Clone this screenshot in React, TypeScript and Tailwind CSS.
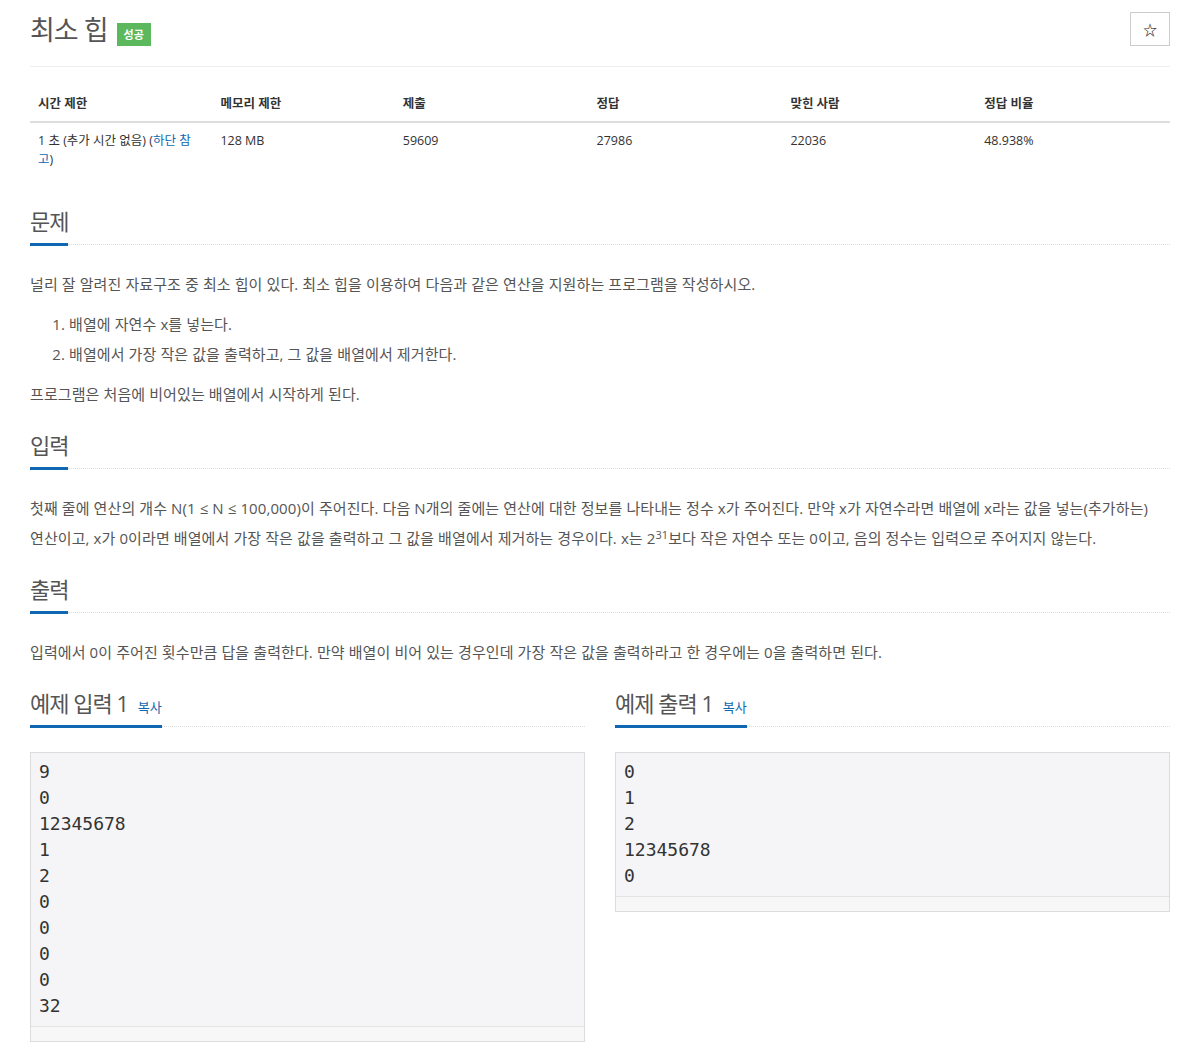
import React from "react";

const sans = "font-['Open_Sans','Noto_Sans_CJK_KR',sans-serif]";

function SectionTitle({ children }: { children: React.ReactNode }) {
  return (
    <div className="flex items-end">
      <span className="inline-block border-b-[3px] border-[#0f67b1] pb-[9px] text-[22px] leading-[26px] text-[#555] tracking-[-1px]">
        {children}
      </span>
      <div className="flex-1 mb-[1px] border-b border-dotted border-[#ddd]" />
    </div>
  );
}

function CopyLink() {
  return <span className="ml-[5px] text-[13px] leading-none text-[#0f67b1] tracking-normal">복사</span>;
}

function SampleBox({ lines }: { lines: string[] }) {
  return (
    <div className="border border-[#dcdcdc] bg-[#f5f5f7]">
      <pre className="px-[8px] pt-[6px] pb-[7px] font-['DejaVu_Sans_Mono',monospace] text-[18px] leading-[26px] text-[#333]">
        {lines.join("\n")}
      </pre>
      <div className="h-[15px] border-t border-[#e3e3e3] bg-[#f7f7f8]" />
    </div>
  );
}

export default function App() {
  const stats = [
    { label: "시간 제한", w: "w-[16%]" },
    { label: "메모리 제한", w: "w-[16%]" },
    { label: "제출", w: "w-[17%]" },
    { label: "정답", w: "w-[17%]" },
    { label: "맞힌 사람", w: "w-[17%]" },
    { label: "정답 비율", w: "" },
  ];

  return (
    <div className={`${sans} bg-white min-h-[1055px] pl-[30px] pr-[31px] text-[#555]`}>
      {/* header */}
      <div className="flex items-start justify-between border-b border-[#eee] pt-[12px] pb-[20px]">
        <div className="flex items-center gap-[9px] pt-[1px]">
          <h1 className="text-[27px] leading-[32px] text-[#555] tracking-[-1px]">최소 힙</h1>
          <span className="mt-[10px] bg-[#5cb85c] px-[7px] py-[3px] text-[11px] leading-[17px] font-bold text-white">성공</span>
        </div>
        <button className="h-[34px] w-[40px] border border-[#ccc] bg-white text-[14px] font-bold text-[#333] flex items-center justify-center">
          ☆
        </button>
      </div>

      {/* stats table */}
      <table className="mt-[20px] w-full border-collapse text-[12.5px] text-[#333]">
        <thead>
          <tr className="border-b-2 border-[#ddd]">
            {stats.map((s) => (
              <th key={s.label} className={`${s.w} px-[8px] py-[8px] text-left font-bold align-bottom leading-[18px]`}>
                {s.label}
              </th>
            ))}
          </tr>
        </thead>
        <tbody>
          <tr>
            <td className="px-[8px] pt-[8px] pb-[8px] align-top leading-[19px]">
              1 초 (추가 시간 없음) (<span className="text-[#0f67b1]">하단 참고</span>)
            </td>
            <td className="px-[8px] pt-[8px] align-top leading-[19px]">128 MB</td>
            <td className="px-[8px] pt-[8px] align-top leading-[19px]">59609</td>
            <td className="px-[8px] pt-[8px] align-top leading-[19px]">27986</td>
            <td className="px-[8px] pt-[8px] align-top leading-[19px]">22036</td>
            <td className="px-[8px] pt-[8px] align-top leading-[19px]">48.938%</td>
          </tr>
        </tbody>
      </table>

      {/* 문제 */}
      <section className="mt-[31px]">
        <SectionTitle>문제</SectionTitle>
        <div className="mt-[23px] text-[15px] leading-[30px] tracking-[0.1px] break-keep">
          <p>널리 잘 알려진 자료구조 중 최소 힙이 있다. 최소 힙을 이용하여 다음과 같은 연산을 지원하는 프로그램을 작성하시오.</p>
          <ol className="list-decimal pl-[39px] my-[10px]">
            <li>배열에 자연수 x를 넣는다.</li>
            <li>배열에서 가장 작은 값을 출력하고, 그 값을 배열에서 제거한다.</li>
          </ol>
          <p>프로그램은 처음에 비어있는 배열에서 시작하게 된다.</p>
        </div>
      </section>

      {/* 입력 */}
      <section className="mt-[23px]">
        <SectionTitle>입력</SectionTitle>
        <div className="mt-[23px] text-[15px] leading-[30px] tracking-[0.1px] break-keep">
          <p>
            첫째 줄에 연산의 개수 N(1 ≤ N ≤ 100,000)이 주어진다. 다음 N개의 줄에는 연산에 대한 정보를 나타내는 정수 x가 주어진다. 만약 x가 자연수라면 배열에 x라는 값을 넣는(추가하는) 연산이고, x가 0이라면 배열에서 가장 작은 값을 출력하고 그 값을 배열에서 제거하는 경우이다. x는 2<sup className="text-[11px] leading-none">31</sup>보다 작은 자연수 또는 0이고, 음의 정수는 입력으로 주어지지 않는다.
          </p>
        </div>
      </section>

      {/* 출력 */}
      <section className="mt-[23px]">
        <SectionTitle>출력</SectionTitle>
        <div className="mt-[23px] text-[15px] leading-[30px] tracking-[0.1px] break-keep">
          <p>입력에서 0이 주어진 횟수만큼 답을 출력한다. 만약 배열이 비어 있는 경우인데 가장 작은 값을 출력하라고 한 경우에는 0을 출력하면 된다.</p>
        </div>
      </section>

      {/* 예제 */}
      <div className="mt-[23px] grid grid-cols-2 gap-[30px]">
        <section>
          <SectionTitle>
            예제 입력 1 <CopyLink />
          </SectionTitle>
          <div className="mt-[24px]">
            <SampleBox lines={["9", "0", "12345678", "1", "2", "0", "0", "0", "0", "32"]} />
          </div>
        </section>
        <section>
          <SectionTitle>
            예제 출력 1 <CopyLink />
          </SectionTitle>
          <div className="mt-[24px]">
            <SampleBox lines={["0", "1", "2", "12345678", "0"]} />
          </div>
        </section>
      </div>
    </div>
  );
}
